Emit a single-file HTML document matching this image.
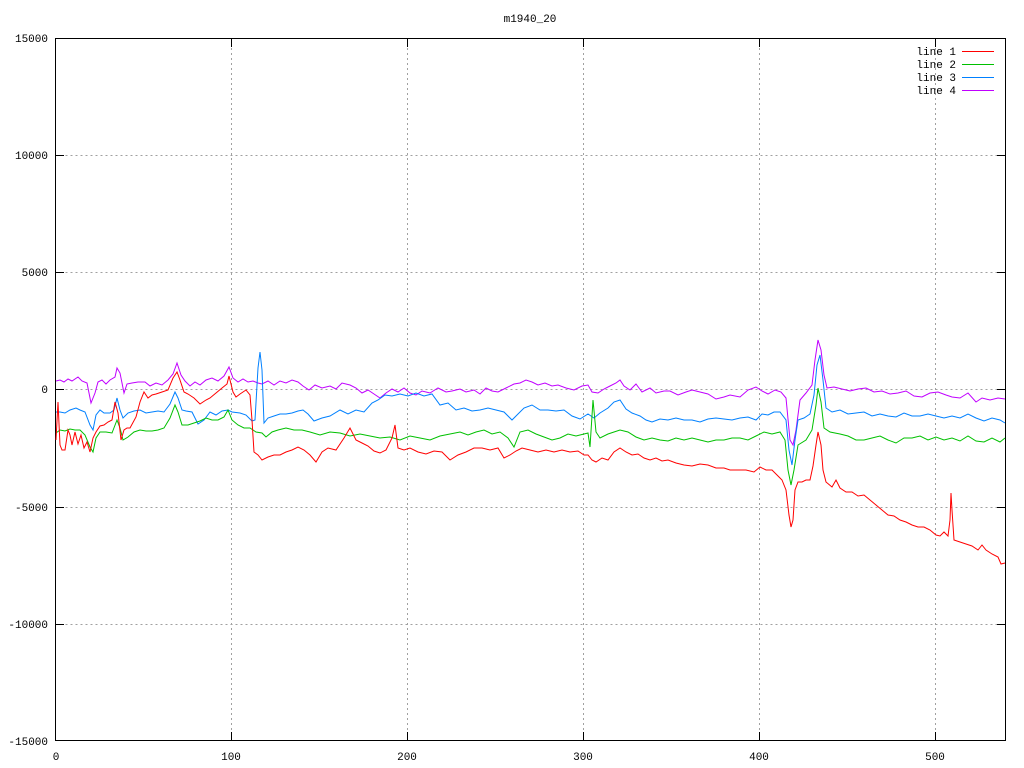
<!DOCTYPE html>
<html><head><style>
html,body{margin:0;padding:0;background:#fff;}
svg{display:block;}
text{font-family:"Liberation Mono","DejaVu Sans Mono",monospace;font-size:11px;fill:#000;}
</style></head><body>
<svg width="1024" height="768" viewBox="0 0 1024 768" xmlns="http://www.w3.org/2000/svg">
<rect width="1024" height="768" fill="#fff"/>
<g stroke="#a0a0a0" stroke-width="1" stroke-dasharray="2,3" fill="none">
<path d="M55.5 155.5H1005M55.5 272.5H1005M55.5 389.5H1005M55.5 507.5H1005M55.5 624.5H1005"/>
<path d="M231.5 38V741M407.5 38V741M583.5 38V741M759.5 38V741M935.5 38V741"/>
</g>
<rect x="55.5" y="38.5" width="950" height="702" fill="none" stroke="#000"/>
<g stroke="#000">
<path d="M55 38.5h9M55 155.5h9M55 272.5h9M55 389.5h9M55 507.5h9M55 624.5h9M55 740.5h9"/>
<path d="M1006 38.5h-9M1006 155.5h-9M1006 272.5h-9M1006 389.5h-9M1006 507.5h-9M1006 624.5h-9M1006 740.5h-9"/>
<path d="M55.5 741v-9M231.5 741v-9M407.5 741v-9M583.5 741v-9M759.5 741v-9M935.5 741v-9"/>
<path d="M231.5 38v9M407.5 38v9M583.5 38v9M759.5 38v9M935.5 38v9"/>
</g>
<g text-anchor="end">
<text x="48" y="42">15000</text><text x="48" y="159">10000</text><text x="48" y="276">5000</text>
<text x="48" y="393">0</text><text x="48" y="511">-5000</text><text x="48" y="628">-10000</text><text x="48" y="745">-15000</text>
</g>
<g text-anchor="middle">
<text x="56" y="760">0</text><text x="231" y="760">100</text><text x="407" y="760">200</text>
<text x="583" y="760">300</text><text x="759" y="760">400</text><text x="935" y="760">500</text>
<text x="530" y="22">m1940_20</text>
</g>
<g text-anchor="end">
<text x="956" y="55">line 1</text><text x="956" y="68">line 2</text><text x="956" y="81">line 3</text><text x="956" y="94">line 4</text>
</g>
<path d="M962 51.5h32" stroke="#ff0000"/>
<path d="M962 64.5h32" stroke="#00c000"/>
<path d="M962 77.5h32" stroke="#0080ff"/>
<path d="M962 90.5h32" stroke="#c000ff"/>
<g fill="none" stroke-width="1">
<polyline stroke="#c000ff" points="56,381 60,380 64,382 68,379 72,381 78,377 82,381 87,383 91,403 95,393 98,382 102,380 106,384 110,380 115,377 117,368 120,373 124,393 127,384 132,383 138,382 145,382 150,386 156,383 162,385 168,380 173,374 177,363 181,375 185,381 190,386 195,382 200,385 206,380 212,378 218,381 224,376 229,367 233,378 238,382 243,379 248,382 253,381 258,383 262,384 268,381 274,385 280,381 286,383 292,380 298,382 303,386 309,390 315,385 322,388 330,386 336,389 342,383 350,385 356,388 362,393 368,390 374,394 380,398 386,393 392,389 398,392 404,388 410,393 416,395 422,391 430,393 438,388 446,392 452,391 460,389 466,392 474,390 480,394 486,388 492,391 498,392 506,388 514,384 520,383 526,380 532,382 538,385 545,383 552,386 558,385 566,388 574,390 582,386 588,385 592,392 598,393 604,389 610,386 616,383 620,380 624,386 630,390 636,384 642,392 650,388 656,393 664,391 670,391 678,395 686,392 692,390 700,392 708,394 716,399 724,397 730,395 740,397 748,390 756,387 762,391 768,394 775,390 781,392 786,398 790,440 793,445 796,430 800,400 806,393 812,385 815,360 818,340 821,350 824,375 827,388 834,387 842,389 850,391 858,389 866,388 874,392 882,391 890,394 898,393 906,391 914,396 922,397 930,393 938,392 946,395 952,397 960,398 968,393 976,402 982,398 990,400 998,398 1005,399"/>
<polyline stroke="#0080ff" points="56,412 60,412 65,413 70,410 76,408 80,410 85,412 90,425 93,430 96,415 100,410 104,413 110,413 114,410 117,398 120,410 123,418 128,413 134,411 140,410 146,413 152,412 158,411 164,412 170,404 175,392 178,398 182,410 186,411 192,412 198,424 204,420 210,412 216,415 222,411 228,410 232,412 240,413 246,415 252,421 255,420 258,368 260,352 262,370 264,423 268,418 274,416 280,414 286,414 292,413 298,411 303,410 308,414 314,421 322,418 330,416 340,410 348,414 356,410 364,412 372,403 378,400 385,395 392,396 400,394 408,396 416,393 424,396 432,394 440,405 448,403 456,410 464,408 472,411 480,410 488,408 496,410 504,412 512,420 518,414 524,408 532,405 540,410 548,410 556,411 564,410 572,416 580,419 588,414 594,418 600,413 608,408 614,402 620,400 626,409 632,413 640,416 646,420 652,422 660,419 668,420 676,418 684,420 692,420 700,422 708,419 716,418 724,419 732,420 740,418 748,417 756,420 762,414 768,415 774,412 780,412 786,420 789,450 792,465 795,440 798,420 804,418 810,414 814,395 817,365 820,355 823,380 826,408 832,412 840,410 848,414 856,413 864,412 872,416 880,414 888,416 896,417 904,413 912,416 920,416 928,414 936,416 944,418 952,416 960,418 968,414 976,418 984,421 992,418 1000,420 1005,423"/>
<polyline stroke="#00c000" points="56,433 60,430 65,431 70,429 75,430 80,430 85,435 90,447 93,452 96,438 100,432 106,432 112,433 117,420 120,428 123,440 128,437 134,432 140,430 146,431 152,431 158,430 164,428 170,418 175,405 178,412 182,425 188,425 194,423 200,421 206,418 212,420 218,420 224,417 228,410 232,420 238,425 244,428 250,428 256,432 262,433 266,437 272,432 278,430 286,428 294,430 302,430 310,432 320,435 330,432 340,433 350,436 360,434 370,436 380,438 390,437 400,440 410,436 420,438 430,440 440,436 450,434 460,432 468,435 476,432 484,430 492,434 500,432 508,438 514,447 520,432 528,430 536,434 544,437 552,440 560,438 568,434 576,436 584,434 588,433 590,447 593,400 596,432 600,438 608,434 614,432 620,430 628,432 636,437 644,440 652,438 660,440 668,441 676,438 684,440 692,438 700,440 708,442 716,440 724,440 732,438 740,438 748,440 756,436 764,432 772,434 780,432 785,440 788,470 791,485 794,470 798,445 806,440 812,430 816,405 818,388 821,402 824,428 830,432 840,434 848,436 856,440 864,440 872,438 880,436 888,440 896,443 904,438 912,438 920,436 928,440 936,437 944,440 952,438 960,441 968,436 976,441 984,442 992,438 1000,442 1005,438"/>
<polyline stroke="#ff0000" points="56,440 58,402 60,445 62,450 65,450 68,430 70,435 72,445 75,432 78,444 81,435 84,448 87,442 90,452 93,438 96,432 100,426 104,425 108,422 112,420 115,402 118,413 121,440 124,430 127,428 130,428 136,417 140,402 144,392 148,398 152,395 156,394 162,392 168,390 173,378 177,372 180,380 184,392 188,394 194,398 200,404 206,400 210,398 216,393 222,388 227,384 229,376 233,392 236,397 240,394 246,390 250,395 252,420 254,452 258,455 262,460 268,457 274,455 280,455 286,452 292,450 298,447 304,450 310,455 316,462 322,452 328,448 336,450 344,438 350,428 356,440 362,443 368,446 374,451 380,453 386,450 392,438 395,425 398,448 404,450 410,448 418,452 426,454 434,451 442,452 450,460 458,455 466,452 474,448 482,448 490,450 498,448 504,458 510,455 516,451 522,448 530,450 538,452 546,450 554,452 562,450 570,452 578,451 584,455 588,455 592,460 596,462 602,458 608,460 614,452 620,448 626,452 632,455 638,454 644,458 650,460 656,458 662,461 668,460 676,463 684,465 692,466 700,464 708,465 716,468 724,468 730,470 738,470 746,470 754,472 760,467 766,470 772,470 778,476 782,480 786,490 789,515 791,527 793,520 795,490 798,482 802,482 806,480 810,480 813,466 816,445 818,432 821,445 823,470 826,482 832,487 836,480 840,488 846,492 852,492 858,496 864,495 870,500 876,505 882,510 888,515 894,516 900,520 906,522 912,525 918,527 924,527 930,530 936,535 940,536 944,532 948,536 950,520 951,493 952,510 954,540 960,542 966,544 972,546 978,550 982,545 986,550 992,554 998,557 1001,564 1005,563"/>
</g>
</svg>
</body></html>
